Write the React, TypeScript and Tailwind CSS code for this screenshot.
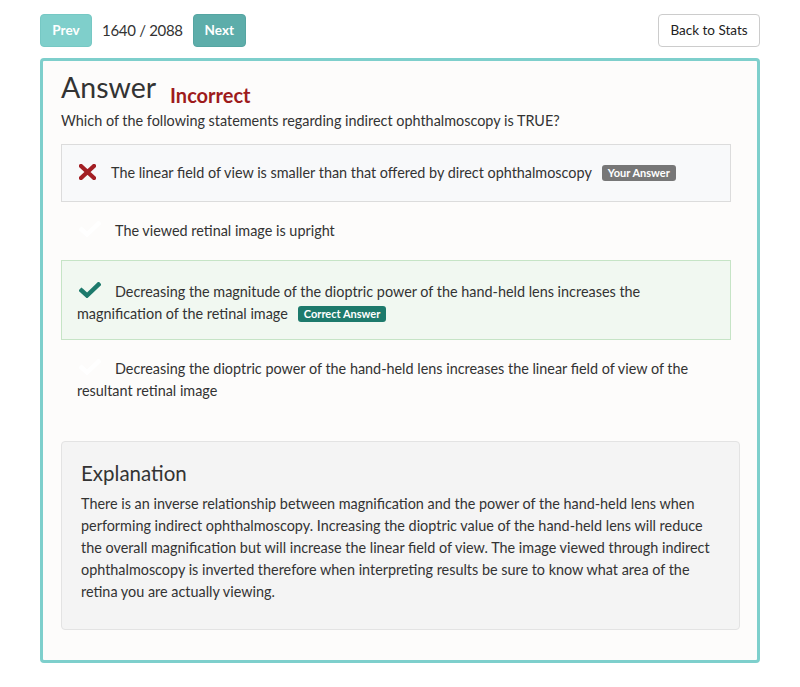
import React from "react";

const options = [
  {
    text: "The linear field of view is smaller than that offered by direct ophthalmoscopy",
    state: "wrong",
  },
  { text: "The viewed retinal image is upright", state: "none" },
  {
    text: "Decreasing the magnitude of the dioptric power of the hand-held lens increases the magnification of the retinal image",
    state: "correct",
  },
  {
    text: "Decreasing the dioptric power of the hand-held lens increases the linear field of view of the resultant retinal image",
    state: "none",
  },
];

function Cross() {
  return (
    <svg width="17" height="16" viewBox="0 0 17 16" className="inline-block align-[-2px] mr-[15px] ml-[2px]">
      <path d="M2 2 L15 14 M15 2 L2 14" stroke="#a31f24" strokeWidth="4.2" strokeLinecap="square" />
    </svg>
  );
}

function Check({ color }: { color: string }) {
  return (
    <svg width="22" height="16" viewBox="0 0 22 16" className="inline-block align-[-1px] mr-[14px] ml-[2px]">
      <path d="M2.5 8.5 L8 13.5 L19.5 2.5" stroke={color} strokeWidth="4.4" fill="none" strokeLinecap="square" />
    </svg>
  );
}

export default function App() {
  return (
    <div className="w-[800px] h-[687px] bg-white text-[#333] font-['Lato',sans-serif] text-[14.4px]">
      {/* Top nav */}
      <div className="flex items-center pt-[14px] px-[40px]">
        <button className="h-[33px] w-[52px] rounded bg-[#7fcfcb] border border-[#76c8c4] text-white font-bold text-[13.5px]">
          Prev
        </button>
        <span className="mx-[10px] text-[15px] tracking-[-0.3px]">1640 / 2088</span>
        <button className="h-[33px] w-[53px] rounded bg-[#5dadaa] border border-[#55a5a2] text-white font-bold text-[13.5px]">
          Next
        </button>
        <button className="ml-auto h-[33px] w-[102px] rounded bg-white border border-[#cccccc] text-[13.5px] text-[#222]">
          Back to Stats
        </button>
      </div>

      {/* Main panel */}
      <div className="mx-[40px] mt-[11px] h-[605px] border-[3px] border-[#7ecfcc] rounded-[4px] bg-[#fdfcfb] px-[18px] pt-[12px]">
        <div className="flex items-end leading-none">
          <h1 className="text-[28.5px] text-[#333]">Answer</h1>
          <span className="ml-[14px] mb-[-3px] text-[20px] font-bold text-[#9e1b1b]">Incorrect</span>
        </div>
        <p className="mt-[9px] leading-[20px]">
          Which of the following statements regarding indirect ophthalmoscopy is TRUE?
        </p>

        <div className="mt-[13px] w-[670px]">
          {options.map((o, i) => (
            <div
              key={i}
              className={
                o.state === "wrong"
                  ? "border border-[#dcdcdc] bg-[#f8f9fa] px-[15px] py-[17px] leading-[22px]"
                  : o.state === "correct"
                  ? "border border-[#c6e4c6] bg-[#f1f8f1] px-[15px] pt-[20px] pb-[14px] leading-[22px]"
                  : "border border-transparent px-[15px] py-[17px] leading-[22px]"
              }
            >
              {o.state === "wrong" && <Cross />}
              {o.state === "correct" && <Check color="#1d7a6c" />}
              {o.state === "none" && <Check color="#ffffff" />}
              {o.text}
              {o.state === "wrong" && (
                <span className="ml-[10px] inline-block align-[1px] rounded-[3px] bg-[#777] px-[6px] py-[1px] text-[11px] font-bold leading-[14px] text-white">
                  Your Answer
                </span>
              )}
              {o.state === "correct" && (
                <span className="ml-[10px] inline-block align-[1px] rounded-[3px] bg-[#1d7a6c] px-[6px] py-[1px] text-[11px] font-bold leading-[14px] text-white">
                  Correct Answer
                </span>
              )}
            </div>
          ))}
        </div>

        <div className="mt-[21px] w-[679px] h-[189px] rounded-[4px] border border-[#e3e3e3] bg-[#f4f4f4] px-[19px] pt-[18px]">
          <h2 className="text-[20.5px] leading-[26px] text-[#333]">Explanation</h2>
          <p className="mt-[7px] leading-[22px]">
            There is an inverse relationship between magnification and the power of the hand-held lens when
            performing indirect ophthalmoscopy. Increasing the dioptric value of the hand-held lens will reduce
            the overall magnification but will increase the linear field of view. The image viewed through indirect
            ophthalmoscopy is inverted therefore when interpreting results be sure to know what area of the
            retina you are actually viewing.
          </p>
        </div>
      </div>
    </div>
  );
}
